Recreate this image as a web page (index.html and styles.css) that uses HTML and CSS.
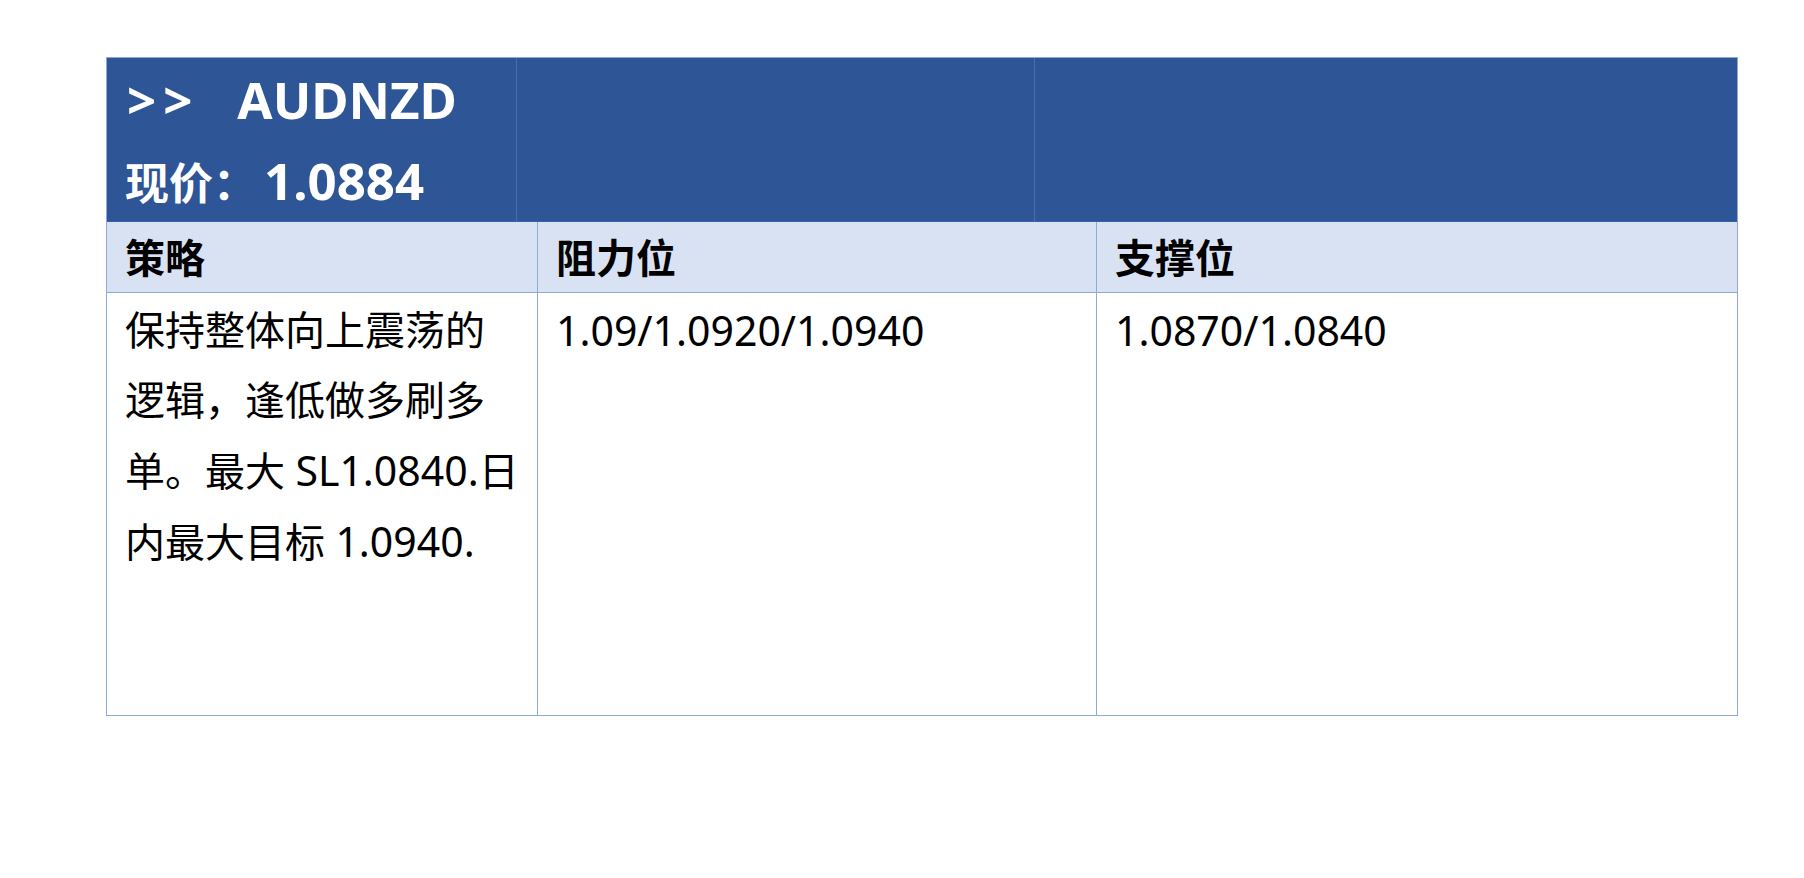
FILE: index.html
```html
<!DOCTYPE html>
<html lang="zh-CN">
<head>
<meta charset="utf-8">
<title>AUDNZD</title>
<link rel="stylesheet" href="styles.css">
</head>
<body>
<div class="page">
  <div class="table">
    <div class="row row-title">
      <div class="cell title-cell">
        <div class="title-line"><span class="arrows">&gt;&gt;</span><span class="pair">AUDNZD</span></div>
        <div class="title-line"><span class="cjk">现价：</span><span class="price">1.0884</span></div>
      </div>
      <div class="cell title-cell"></div>
      <div class="cell title-cell"></div>
    </div>
    <div class="row row-head">
      <div class="cell head-cell">策略</div>
      <div class="cell head-cell">阻力位</div>
      <div class="cell head-cell">支撑位</div>
    </div>
    <div class="row row-body">
      <div class="cell body-cell strategy">保持整体向上震荡的<br>逻辑，逢低做多刷多<br>单。最大 <span class="num">SL1.0840.</span>日<br>内最大目标 <span class="num">1.0940.</span></div>
      <div class="cell body-cell"><span class="num">1.09/1.0920/1.0940</span></div>
      <div class="cell body-cell"><span class="num">1.0870/1.0840</span></div>
    </div>
  </div>
</div>
</body>
</html>
```

FILE: styles.css
```css
* {
  box-sizing: border-box;
}

html, body {
  margin: 0;
  padding: 0;
  background: #ffffff;
}

body {
  font-family: "Noto Sans", "Noto Sans CJK SC", sans-serif;
  color: #000000;
}

.page {
  padding: 57px 0 0 106px;
}

.table {
  width: 1632px;
  border: 1px solid #90a9d8;
  display: flex;
  flex-direction: column;
}

.row {
  display: grid;
}

.cell {
  border-right: 1px solid #90a9d8;
}

.cell:last-child {
  border-right: none;
}

/* title row */
.row-title {
  grid-template-columns: 410px 518px 1fr;
  height: 164px;
  background: #2e5596;
  border-bottom: 1px solid #3a62aa;
}

.title-cell {
  border-right-color: #4a6cab;
  padding: 1px 17px 0 18px;
  color: #ffffff;
  font-weight: 700;
  font-size: 51px;
  line-height: 81px;
  white-space: nowrap;
}

.arrows {
  display: inline-block;
  margin-left: 2px;
  margin-right: 38px;
  letter-spacing: 7px;
}

.cjk {
  font-size: 44px;
}

.price {
  margin-left: 7px;
}

/* column heading row */
.row-head {
  grid-template-columns: 431px 559px 1fr;
  height: 71px;
  background: #d9e2f3;
  border-bottom: 1px solid #90a9d8;
}

.head-cell {
  padding: 2px 17px 0 18px;
  font-weight: 700;
  font-size: 40px;
  line-height: 68px;
  white-space: nowrap;
}

/* body row */
.row-body {
  grid-template-columns: 431px 559px 1fr;
  height: 422px;
}

.body-cell {
  padding: 2px 17px 0 18px;
  font-size: 40px;
  line-height: 70px;
  white-space: nowrap;
}

.num {
  font-size: 41px;
}
```
